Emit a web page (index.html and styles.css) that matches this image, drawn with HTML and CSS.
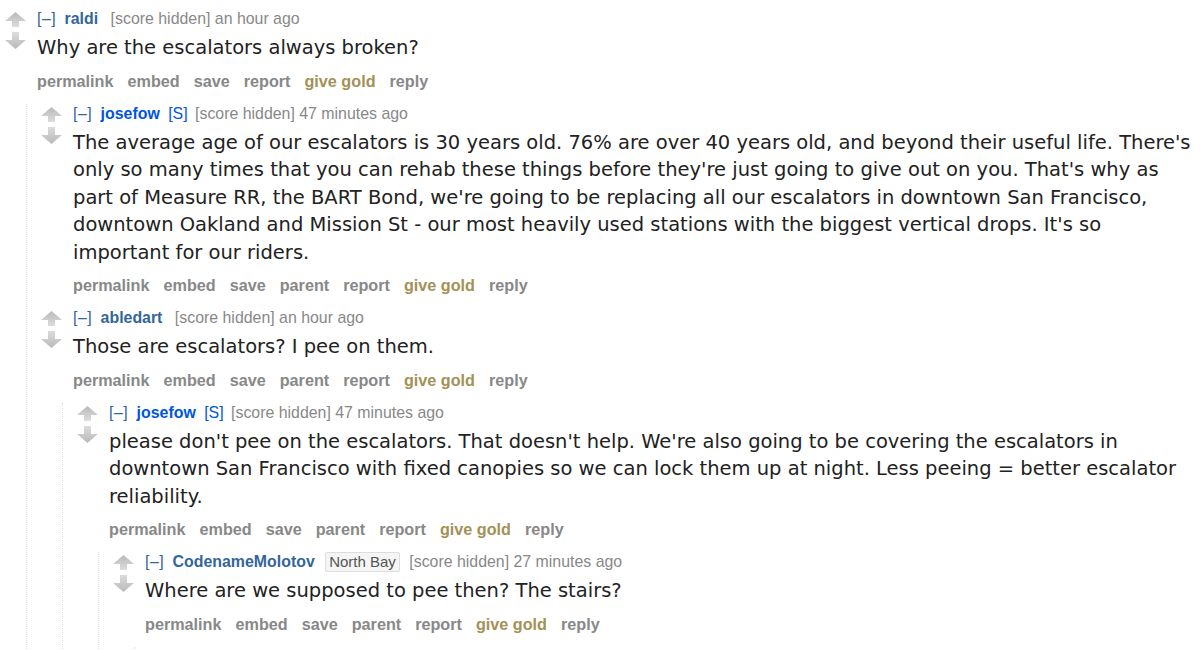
FILE: index.html
```html
<!DOCTYPE html>
<html>
<head>
<meta charset="utf-8">
<link rel="stylesheet" href="styles.css">
</head>
<body>
<div class="page">
  <div class="comment">
    <div class="vote">
      <svg class="arrows" viewBox="0 0 21 38" width="21" height="38"><defs><linearGradient id="gu" x1="0" y1="0" x2="0" y2="1"><stop offset="0" stop-color="#b9b9b9"/><stop offset="1" stop-color="#dcdcdc"/></linearGradient><linearGradient id="gd" x1="0" y1="0" x2="0" y2="1"><stop offset="0" stop-color="#dcdcdc"/><stop offset="1" stop-color="#b9b9b9"/></linearGradient></defs><path d="M10.5 0 L21 9 L14 9 L14 15 L7 15 L7 9 L0 9 Z" fill="url(#gu)"/><path d="M7 20 L14 20 L14 28 L21 28 L10.5 37 L0 28 L7 28 Z" fill="url(#gd)"/></svg>
    </div>
    <div class="entry">
      <p class="tagline"><span class="expand">[–]</span> <a class="author">raldi</a> <span class="score">[score hidden] an hour ago</span></p>
      <div class="md">Why are the escalators always broken?</div>
      <ul class="buttons"><li>permalink</li><li>embed</li><li>save</li><li>report</li><li class="gold">give gold</li><li>reply</li></ul>
    </div>
    <div class="child">
      <div class="comment">
        <div class="vote">
          <svg class="arrows" viewBox="0 0 21 38" width="21" height="38"><path d="M10.5 0 L21 9 L14 9 L14 15 L7 15 L7 9 L0 9 Z" fill="url(#gu)"/><path d="M7 20 L14 20 L14 28 L21 28 L10.5 37 L0 28 L7 28 Z" fill="url(#gd)"/></svg>
        </div>
        <div class="entry">
          <p class="tagline"><span class="expand">[–]</span> <a class="author submitter">josefow</a> <span class="op">[S]</span> <span class="score">[score hidden] 47 minutes ago</span></p>
          <div class="md">The average age of our escalators is 30 years old. 76% are over 40 years old, and beyond their useful life. There's only so many times that you can rehab these things before they're just going to give out on you. That's why as part of Measure RR, the BART Bond, we're going to be replacing all our escalators in downtown San Francisco, downtown Oakland and Mission St - our most heavily used stations with the biggest vertical drops. It's so important for our riders.</div>
          <ul class="buttons"><li>permalink</li><li>embed</li><li>save</li><li>parent</li><li>report</li><li class="gold">give gold</li><li>reply</li></ul>
        </div>
      </div>
      <div class="comment">
        <div class="vote">
          <svg class="arrows" viewBox="0 0 21 38" width="21" height="38"><path d="M10.5 0 L21 9 L14 9 L14 15 L7 15 L7 9 L0 9 Z" fill="url(#gu)"/><path d="M7 20 L14 20 L14 28 L21 28 L10.5 37 L0 28 L7 28 Z" fill="url(#gd)"/></svg>
        </div>
        <div class="entry">
          <p class="tagline"><span class="expand">[–]</span> <a class="author">abledart</a> <span class="score">[score hidden] an hour ago</span></p>
          <div class="md">Those are escalators? I pee on them.</div>
          <ul class="buttons"><li>permalink</li><li>embed</li><li>save</li><li>parent</li><li>report</li><li class="gold">give gold</li><li>reply</li></ul>
        </div>
        <div class="child">
          <div class="comment">
            <div class="vote">
              <svg class="arrows" viewBox="0 0 21 38" width="21" height="38"><path d="M10.5 0 L21 9 L14 9 L14 15 L7 15 L7 9 L0 9 Z" fill="url(#gu)"/><path d="M7 20 L14 20 L14 28 L21 28 L10.5 37 L0 28 L7 28 Z" fill="url(#gd)"/></svg>
            </div>
            <div class="entry">
              <p class="tagline"><span class="expand">[–]</span> <a class="author submitter">josefow</a> <span class="op">[S]</span> <span class="score">[score hidden] 47 minutes ago</span></p>
              <div class="md">please don't pee on the escalators. That doesn't help. We're also going to be covering the escalators in downtown San Francisco with fixed canopies so we can lock them up at night. Less peeing = better escalator reliability.</div>
              <ul class="buttons"><li>permalink</li><li>embed</li><li>save</li><li>parent</li><li>report</li><li class="gold">give gold</li><li>reply</li></ul>
            </div>
            <div class="child">
              <div class="comment">
                <div class="vote">
                  <svg class="arrows" viewBox="0 0 21 38" width="21" height="38"><path d="M10.5 0 L21 9 L14 9 L14 15 L7 15 L7 9 L0 9 Z" fill="url(#gu)"/><path d="M7 20 L14 20 L14 28 L21 28 L10.5 37 L0 28 L7 28 Z" fill="url(#gd)"/></svg>
                </div>
                <div class="entry">
                  <p class="tagline"><span class="expand">[–]</span> <a class="author">CodenameMolotov</a> <span class="flair">North Bay</span> <span class="score">[score hidden] 27 minutes ago</span></p>
                  <div class="md">Where are we supposed to pee then? The stairs?</div>
                  <ul class="buttons"><li>permalink</li><li>embed</li><li>save</li><li>parent</li><li>report</li><li class="gold">give gold</li><li>reply</li></ul>
                </div>
                <div class="child"></div>
              </div>
            </div>
          </div>
        </div>
      </div>
    </div>
  </div>
</div>
</body>
</html>
```

FILE: styles.css
```css
html, body {
  margin: 0;
  padding: 0;
  background: #fff;
}
.page {
  padding: 9px 2px 0 5px;
}
.comment {
  display: grid;
  grid-template-columns: 32px 1fr;
}
.vote {
  padding-top: 3px;
}
.arrows {
  display: block;
}
.entry {
  min-width: 0;
}
.tagline {
  margin: 0;
  font-family: "Liberation Sans", Arial, sans-serif;
  font-size: 15.9px;
  line-height: 20px;
  color: #888;
  white-space: nowrap;
}
.expand {
  color: #369;
  letter-spacing: 0.5px;
  margin-right: 2px;
}
.author {
  color: #369;
  font-weight: bold;
  margin: 0 8px 0 2px;
}
.author.submitter {
  color: #0055df;
  margin-right: 4px;
}
.op {
  color: #0055df;
  margin-right: 3px;
}
.flair {
  display: inline-block;
  color: #545454;
  background: #f5f5f5;
  border: 1px solid #ddd;
  padding: 0 3px;
  font-size: 15px;
  line-height: 18px;
  margin: 0 5px 0 -2px;
  border-radius: 2px;
}
.md {
  margin-top: 5px;
  font-family: "DejaVu Sans", Verdana, sans-serif;
  font-size: 19.5px;
  line-height: 27.5px;
  color: #222;
}
.buttons {
  list-style: none;
  margin: 9px 0 0;
  padding: 0;
  display: flex;
  gap: 14px;
  font-family: "Liberation Sans", Arial, sans-serif;
  font-weight: bold;
  font-size: 16.2px;
  line-height: 20px;
  color: #888;
}
.buttons .gold {
  color: #a39156;
}
.child {
  grid-column: 1 / -1;
  margin: 13px 0 0 21px;
  padding-left: 14px;
  border-left: 1px dotted #ddd;
  display: flex;
  flex-direction: column;
  gap: 13px;
}
.child:empty {
  height: 20px;
}
```
